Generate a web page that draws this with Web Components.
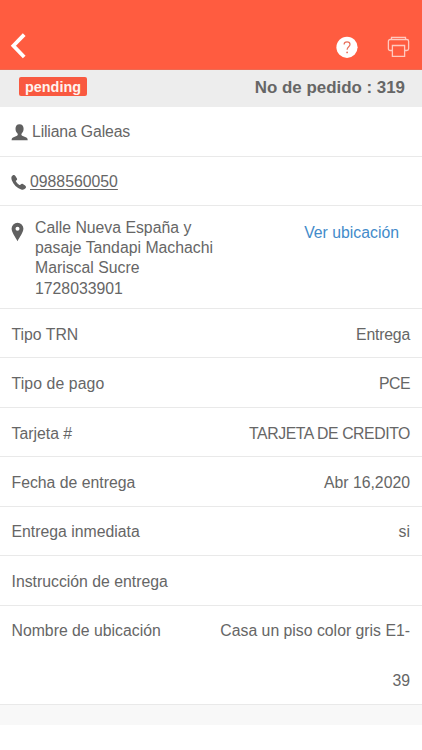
<!DOCTYPE html>
<html lang="es">
<head>
    <meta charset="UTF-8">
    <meta name="viewport" content="width=device-width, initial-scale=1.0">
    <title>Pedido 319</title>
    <style>
        body {
            margin: 0;
            background: #fff;
            color: #666;
            font-family: "Liberation Sans", Arial, sans-serif;
            font-size: 15.8px;
            line-height: 20px;
        }
        contact-row[icon="user"] {
            letter-spacing: -.15px;
        }
        .card {
            --value-spacing: -.42px;
        }
        .type {
            --value-spacing: -.2px;
        }
        .payment {
            --value-spacing: -.5px;
            --label-spacing: .1px;
        }
    </style>
</head>
<body>
    <order-page>
        <order-toolbar></order-toolbar>
        <order-status status="pending">No de pedido : 319</order-status>
        <contact-row icon="user">Liliana Galeas</contact-row>
        <contact-row icon="phone" underline>0988560050</contact-row>
        <address-row link="Ver ubicación">Calle Nueva España y<br>pasaje Tandapi Machachi<br>Mariscal Sucre<br>1728033901</address-row>
        <detail-row class="type" label="Tipo TRN">Entrega</detail-row>
        <detail-row class="payment" label="Tipo de pago">PCE</detail-row>
        <detail-row class="card" label="Tarjeta #">TARJETA DE CREDITO</detail-row>
        <detail-row label="Fecha de entrega">Abr 16,2020</detail-row>
        <detail-row label="Entrega inmediata">si</detail-row>
        <detail-row label="Instrucción de entrega"></detail-row>
        <detail-row label="Nombre de ubicación">Casa un piso color gris E1-<br>39</detail-row>
    </order-page>

    <!-- Page Template -->
    <template id="order-page-template">
        <style>
            :host {
                display: block;
            }
            footer {
                height: 20px;
                background: #f8f8f8;
            }
        </style>
        <slot></slot>
        <footer></footer>
    </template>

    <!-- Toolbar Template -->
    <template id="order-toolbar-template">
        <style>
            :host {
                display: flex;
                align-items: flex-end;
                justify-content: space-between;
                box-sizing: border-box;
                height: 70px;
                padding: 0 12px 10px 10px;
                background: #ff5c40;
                border-bottom: 1px solid #ee6a52;
            }
            svg {
                display: block;
            }
            .actions {
                display: flex;
                align-items: center;
                gap: 29px;
            }
        </style>
        <svg width="17" height="26" viewBox="0 0 17 26" fill="none" stroke="#fff" stroke-width="3.8">
            <path d="M14.2 1.6 3.4 12.8 14.2 24"/>
        </svg>
        <div class="actions">
            <svg width="22" height="23" viewBox="0 0 22 23">
                <circle cx="11" cy="11.3" r="10.6" fill="#fff"/>
                <path d="M8.1 8.4C8.1 4.9 14 4.9 14 8.4c0 2.2-2.9 2.6-2.9 5.4" fill="none" stroke="#e8705c" stroke-width="1.2"/>
                <circle cx="11.1" cy="16.4" r=".9" fill="#e8705c"/>
            </svg>
            <svg width="23" height="23" viewBox="0 0 23 23" fill="none" stroke="#ffc9bf" stroke-width="1.3">
                <path d="M4.5 3.5V1.3h14v2.2M5.3 14.5H3.2A1.8 1.8 0 0 1 1.4 12.7V5.3a1.8 1.8 0 0 1 1.8-1.8h16.6a1.8 1.8 0 0 1 1.8 1.8v7.4a1.8 1.8 0 0 1-1.8 1.8H17.7"/>
                <path d="M5.4 9.5h12.2v10.8H5.4z"/>
            </svg>
        </div>
    </template>

    <!-- Status Bar Template -->
    <template id="order-status-template">
        <style>
            :host {
                display: flex;
                align-items: flex-start;
                justify-content: space-between;
                box-sizing: border-box;
                height: 37px;
                padding: 7px 17px 0 19px;
                background: #ededed;
                font-weight: bold;
            }
            .badge {
                box-sizing: border-box;
                width: 68px;
                height: 19px;
                border-radius: 2px;
                background: #f95940;
                color: #fff3ee;
                font-size: 14.4px;
                line-height: 20px;
                text-align: center;
            }
            .number {
                padding-top: 1px;
                font-size: 16.9px;
            }
        </style>
        <span class="badge"></span>
        <span class="number"><slot></slot></span>
    </template>

    <!-- Contact Row Template -->
    <template id="contact-row-template">
        <style>
            :host {
                display: flex;
                align-items: center;
                box-sizing: border-box;
                height: 49.5px;
                padding: 2px 11px 0;
                border-bottom: 1px solid #e9e9e9;
            }
            svg {
                display: none;
                fill: #606060;
            }
            :host([icon="user"]) .user,
            :host([icon="phone"]) .phone {
                display: block;
            }
            .user {
                margin: 1px 4px 0 0;
            }
            .phone {
                margin: 2px 4px 0 0;
            }
            :host([underline]) span {
                text-decoration: underline;
                text-decoration-thickness: 1px;
                text-underline-offset: 2px;
            }
        </style>
        <svg class="user" width="17" height="17" viewBox="0 0 17 17">
            <path d="M8.5.3c2.8 0 4.1 1.8 4.1 4.5 0 1.9-.8 3.7-1.9 4.8-.5.8-.4 1.7.5 2.1l4.1 1.7c1 .5 1.4 1.5 1.4 2.9H.6c0-1.4.4-2.4 1.4-2.9l4-1.7c.9-.4 1-1.3.5-2.1-1.2-1.1-2-2.9-2-4.8C4.5 2.1 5.7.3 8.5.3z"/>
        </svg>
        <svg class="phone" width="15" height="15" viewBox="0 0 15 15">
            <path d="M1.6.6C2.7-.2 3.7 0 4.4 1l1.4 2.2c.6.9.4 1.6-.6 2.2-.4.3-.5.7-.2 1.2.9 1.5 2 2.5 3.4 3.3.6.3 1 .2 1.3-.3.6-.8 1.3-1 2.2-.5l2.2 1.4c1 .6 1.2 1.7.4 2.7-1 1.3-2.5 1.8-4.3 1.2C5.9 13 2.4 9.6.8 5.2.1 3.1.2 1.5 1.6.6z"/>
        </svg>
        <span><slot></slot></span>
    </template>

    <!-- Address Row Template -->
    <template id="address-row-template">
        <style>
            :host {
                display: flex;
                align-items: flex-start;
                box-sizing: border-box;
                height: 103px;
                padding: 12px 23px 0 11px;
                border-bottom: 1px solid #e9e9e9;
                line-height: 20.2px;
            }
            svg {
                flex: none;
                margin: 4px 11px 0 0;
                fill: #606060;
            }
            .address {
                flex: 1;
            }
            a {
                margin-top: 4.5px;
                color: #428bca;
            }
        </style>
        <svg width="13" height="20" viewBox="0 0 13 20">
            <path fill-rule="evenodd" d="M6.5.7a5.9 5.9 0 0 1 5.9 5.9c0 3.9-3.7 8.5-5.9 12.6C4.3 15.1.6 10.5.6 6.6A5.9 5.9 0 0 1 6.5.7zm0 4a2 2 0 1 0 0 4 2 2 0 0 0 0-4z"/>
        </svg>
        <div class="address"><slot></slot></div>
        <a></a>
    </template>

    <!-- Detail Row Template -->
    <template id="detail-row-template">
        <style>
            :host {
                display: flex;
                justify-content: space-between;
                box-sizing: border-box;
                min-height: 49.45px;
                padding: 0 12px 0 11.5px;
                border-bottom: 1px solid #e9e9e9;
                line-height: 49.45px;
            }
            span {
                margin: .6px 0 -1.6px;
            }
            .label {
                letter-spacing: var(--label-spacing, 0);
            }
            .value {
                letter-spacing: var(--value-spacing, 0);
                text-align: right;
            }
        </style>
        <span class="label"></span>
        <span class="value"><slot></slot></span>
    </template>

    <script>
        class TemplateElement extends HTMLElement {
            constructor() {
                super();
                this.attachShadow({ mode: 'open' });
            }

            connectedCallback() {
                const template = document.getElementById(`${this.localName}-template`);
                this.shadowRoot.appendChild(template.content.cloneNode(true));
                this.render();
            }

            render() {}
        }

        class OrderPage extends TemplateElement {}

        class OrderToolbar extends TemplateElement {}

        class OrderStatus extends TemplateElement {
            render() {
                this.shadowRoot.querySelector('.badge').textContent = this.getAttribute('status');
            }
        }

        class ContactRow extends TemplateElement {}

        class AddressRow extends TemplateElement {
            render() {
                this.shadowRoot.querySelector('a').textContent = this.getAttribute('link');
            }
        }

        class DetailRow extends TemplateElement {
            render() {
                this.shadowRoot.querySelector('.label').textContent = this.getAttribute('label');
            }
        }

        // Define custom elements
        customElements.define('order-page', OrderPage);
        customElements.define('order-toolbar', OrderToolbar);
        customElements.define('order-status', OrderStatus);
        customElements.define('contact-row', ContactRow);
        customElements.define('address-row', AddressRow);
        customElements.define('detail-row', DetailRow);
    </script>
</body>
</html>
